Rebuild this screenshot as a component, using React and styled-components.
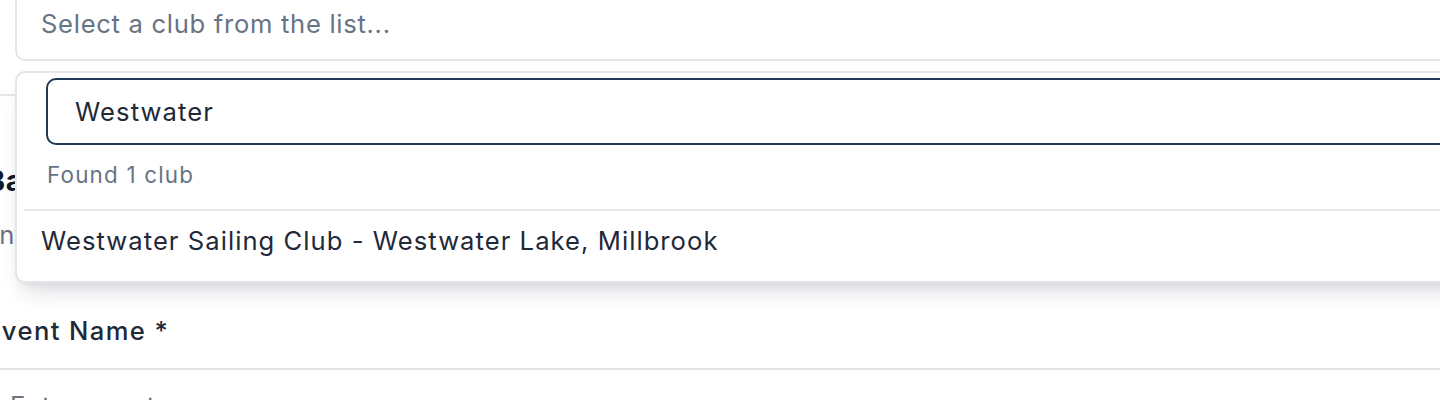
import React, { useState } from 'react';
import styled, { createGlobalStyle } from 'styled-components';

const GlobalStyle = createGlobalStyle`
  html, body {
    margin: 0;
    padding: 0;
    background: #ffffff;
  }
  body {
    font-family: Inter, "Noto Sans", "Liberation Sans", sans-serif;
    color: #1f2937;
  }
`;

const Viewport = styled.div`
  position: relative;
  width: 1440px;
  height: 400px;
  overflow: hidden;
  background: #ffffff;
`;

const Form = styled.div`
  display: flex;
  flex-direction: column;
  margin-left: -17px;
  width: 1560px;
`;

const ClubSelect = styled.div`
  display: flex;
  align-items: center;
  box-sizing: border-box;
  margin: -14px 0 0 32px;
  height: 75px;
  padding-left: 24px;
  border: 2px solid #e3e5e8;
  border-radius: 10px;
  background: #ffffff;
  font-size: 25.6px;
  letter-spacing: 0.7px;
  color: #687384;
`;

const Section = styled.section`
  display: flex;
  flex-direction: column;
  margin-top: 33px;
  padding-top: 65px;
  border-top: 2px solid #e5e7eb;
`;

const SectionTitle = styled.h2`
  margin: 0;
  padding-left: 3px;
  font-size: 28.8px;
  line-height: 40px;
  font-weight: 700;
  letter-spacing: 0.8px;
  color: #111827;
`;

const SectionHint = styled.p`
  margin: 15px 0 0;
  font-size: 25.6px;
  line-height: 38px;
  letter-spacing: 0.8px;
  color: #6b7280;
`;

const Label = styled.label`
  margin-top: 58px;
  padding-left: 2px;
  font-size: 25.6px;
  line-height: 38px;
  font-weight: 500;
  letter-spacing: 1.4px;
  color: #1f2937;
`;

const TextInput = styled.input`
  box-sizing: border-box;
  margin-top: 18px;
  height: 75px;
  padding: 0 25px;
  border: 2px solid #e3e5e8;
  border-radius: 10px;
  font-family: inherit;
  font-size: 25.6px;
  letter-spacing: 0.8px;
  color: #1f2937;
  outline: none;

  &::placeholder {
    color: #6b7280;
  }
`;

const Popover = styled.div`
  position: absolute;
  top: 71px;
  left: 15px;
  width: 1520px;
  box-sizing: border-box;
  border: 2px solid #e3e5e8;
  border-radius: 10px;
  background: #ffffff;
  box-shadow: 0 16px 22px -8px rgba(15, 23, 42, 0.14), 0 6px 10px -6px rgba(15, 23, 42, 0.1);
`;

const SearchRow = styled.div`
  padding: 5px 0 0 29px;
`;

const SearchInput = styled.input`
  display: block;
  box-sizing: border-box;
  width: 100%;
  height: 67px;
  padding: 0 27px;
  border: 2px solid #1f3856;
  border-radius: 10px;
  font-family: inherit;
  font-size: 25.6px;
  letter-spacing: 1.1px;
  color: #1f2937;
  background: #ffffff;
  outline: none;
`;

const ResultCount = styled.div`
  margin-top: 14px;
  padding: 0 0 18px 30px;
  font-size: 22.4px;
  line-height: 32px;
  letter-spacing: 1.2px;
  color: #687384;
`;

const Divider = styled.hr`
  margin: 0 0 0 7px;
  border: 0;
  border-top: 2px solid #e5e7eb;
`;

const OptionList = styled.ul`
  list-style: none;
  margin: 0;
  padding: 11px 0 21px;
`;

const Option = styled.li`
  padding-left: 24px;
  font-size: 25.6px;
  line-height: 38px;
  letter-spacing: 1.05px;
  color: #1f2937;
  cursor: pointer;
`;

const clubs = [
  { id: 1, name: 'Westwater Sailing Club', venue: 'Westwater Lake, Millbrook' },
];

export default function App() {
  const [query, setQuery] = useState('Westwater');
  const found = clubs.filter((c) =>
    c.name.toLowerCase().includes(query.toLowerCase())
  );

  return (
    <Viewport>
      <GlobalStyle />
      <Form>
        <ClubSelect>Select a club from the list...</ClubSelect>
        <Section>
          <SectionTitle>Basic Information</SectionTitle>
          <SectionHint>Enter the main details of your event</SectionHint>
          <Label>Event Name *</Label>
          <TextInput placeholder="Enter event name" />
        </Section>
      </Form>

      <Popover>
        <SearchRow>
          <SearchInput value={query} onChange={(e) => setQuery(e.target.value)} />
        </SearchRow>
        <ResultCount>
          Found {found.length} {found.length === 1 ? 'club' : 'clubs'}
        </ResultCount>
        <Divider />
        <OptionList>
          {found.map((c) => (
            <Option key={c.id}>
              {c.name} - {c.venue}
            </Option>
          ))}
        </OptionList>
      </Popover>
    </Viewport>
  );
}
